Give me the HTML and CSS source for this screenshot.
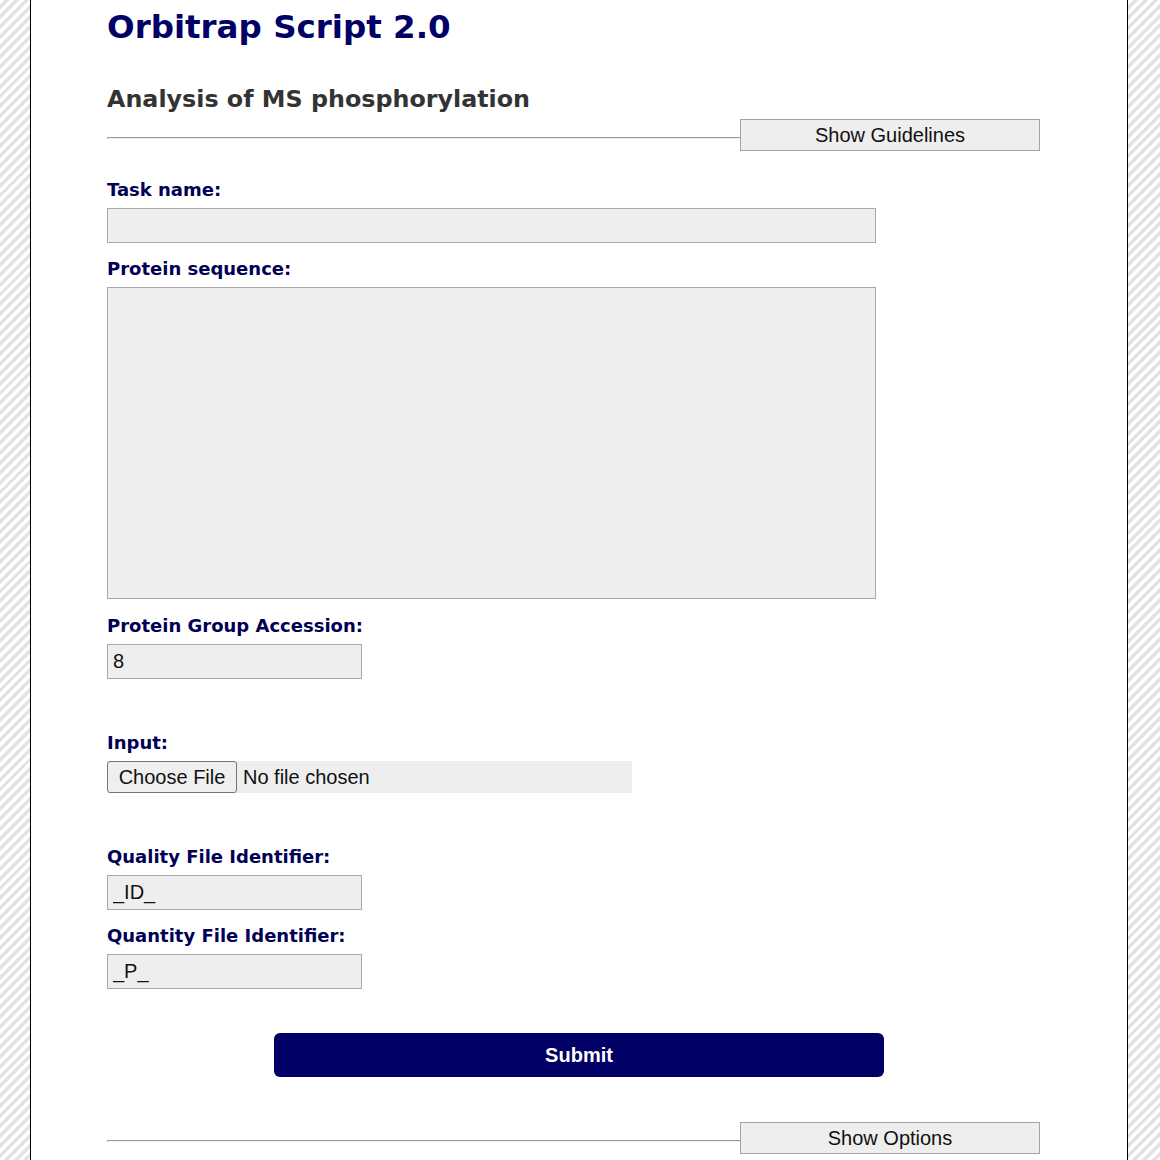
FILE: index.html
```html
<!DOCTYPE html>
<html>
<head>
<meta charset="utf-8">
<title>Orbitrap Script 2.0</title>
<link rel="stylesheet" href="styles.css">
</head>
<body>
<div class="page">
  <div class="content">
    <h1 class="title">Orbitrap Script 2.0</h1>
    <h2 class="subtitle">Analysis of MS phosphorylation</h2>
    <div class="toggle-row">
      <div class="rule"></div>
      <button class="toggle" type="button">Show Guidelines</button>
    </div>

    <form class="form">
      <label class="label first">Task name:</label>
      <input class="field wide" type="text">

      <label class="label">Protein sequence:</label>
      <textarea class="field area"></textarea>

      <label class="label after-area">Protein Group Accession:</label>
      <input class="field short" type="text" value="8">

      <label class="label gap">Input:</label>
      <input class="file" type="file">

      <label class="label gap">Quality File Identifier:</label>
      <input class="field short" type="text" value="_ID_">

      <label class="label">Quantity File Identifier:</label>
      <input class="field short" type="text" value="_P_">
    </form>
  </div>

  <div class="submit-row">
    <button class="submit" type="button">Submit</button>
  </div>

  <div class="content">
    <div class="toggle-row bottom">
      <div class="rule"></div>
      <button class="toggle" type="button">Show Options</button>
    </div>
  </div>
</div>
</body>
</html>
```
FILE: styles.css
```css
html, body {
  margin: 0;
  padding: 0;
}
body {
  background-color: #fff;
  background-image: repeating-linear-gradient(135deg, #ffffff 0px, #ffffff 3.5px, #e3e3e3 3.5px, #e3e3e3 7px);
  min-height: 1160px;
  font-family: "DejaVu Sans", Verdana, sans-serif;
}
.page {
  display: flow-root;
  width: 1098px;
  margin: 0 0 0 30px;
  background: #fff;
  border-left: 1px solid #000;
  border-right: 1px solid #000;
  min-height: 1160px;
  box-sizing: border-box;
}
.content {
  margin-left: 76px;
  width: 933px;
}
.title {
  margin: 9px 0 0;
  font-size: 32.5px;
  font-weight: bold;
  color: #000066;
  line-height: 37px;
}
.subtitle {
  margin: 39px 0 0;
  font-size: 23.8px;
  font-weight: bold;
  color: #333333;
  line-height: 28px;
}
.toggle-row {
  display: flex;
  align-items: center;
  margin-top: 6px;
}
.rule {
  flex: 1;
  border-top: 1px solid #9b9b9b;
  border-bottom: 1px solid #eeeeee;
  border-left: 1px solid #9b9b9b;
  margin-top: 6px;
  height: 2px;
  box-sizing: border-box;
}
.toggle {
  width: 300px;
  height: 32px;
  background: #eeeeee;
  border: 1px solid #a3a3a3;
  font-family: "Liberation Sans", Arial, sans-serif;
  font-size: 20px;
  color: #111;
  padding: 0;
  margin: 0;
}
.form {
  display: flex;
  flex-direction: column;
  align-items: flex-start;
}
.label {
  font-size: 18px;
  font-weight: bold;
  color: #000055;
  line-height: 19px;
  margin-top: 16px;
  margin-bottom: 9px;
}
.label.first {
  margin-top: 29px;
}
.label.after-area {
  margin-top: 17px;
}
.label.gap {
  margin-top: 54px;
}
.field {
  box-sizing: border-box;
  background: #eeeeee;
  border: 1px solid #a9a9a9;
  font-family: "Liberation Sans", Arial, sans-serif;
  font-size: 20px;
  color: #111;
  padding: 0 5px;
  margin: 0;
  border-radius: 0;
}
.wide {
  width: 769px;
  height: 35px;
}
.area {
  width: 769px;
  height: 312px;
  resize: none;
  display: block;
}
.short {
  width: 255px;
  height: 35px;
}
.file {
  width: 525px;
  height: 32px;
  background: #eeeeee;
  font-family: "Liberation Sans", Arial, sans-serif;
  font-size: 20px;
  color: #111;
  margin: 0;
  padding: 0;
}
.file::file-selector-button {
  height: 32px;
  width: 130px;
  font-family: "Liberation Sans", Arial, sans-serif;
  font-size: 20px;
  color: #111;
  background: #efefef;
  border: 1px solid #767676;
  border-radius: 3px;
  margin: 0 6px 0 0;
  padding: 0;
}
.submit-row {
  display: flex;
  justify-content: center;
  margin-top: 44px;
}
.submit {
  width: 610px;
  height: 44px;
  background: #000066;
  color: #fff;
  border: none;
  border-radius: 6px;
  font-family: "Liberation Sans", Arial, sans-serif;
  font-size: 20px;
  font-weight: bold;
  padding: 0;
}
.toggle-row.bottom {
  margin-top: 45px;
}
```
